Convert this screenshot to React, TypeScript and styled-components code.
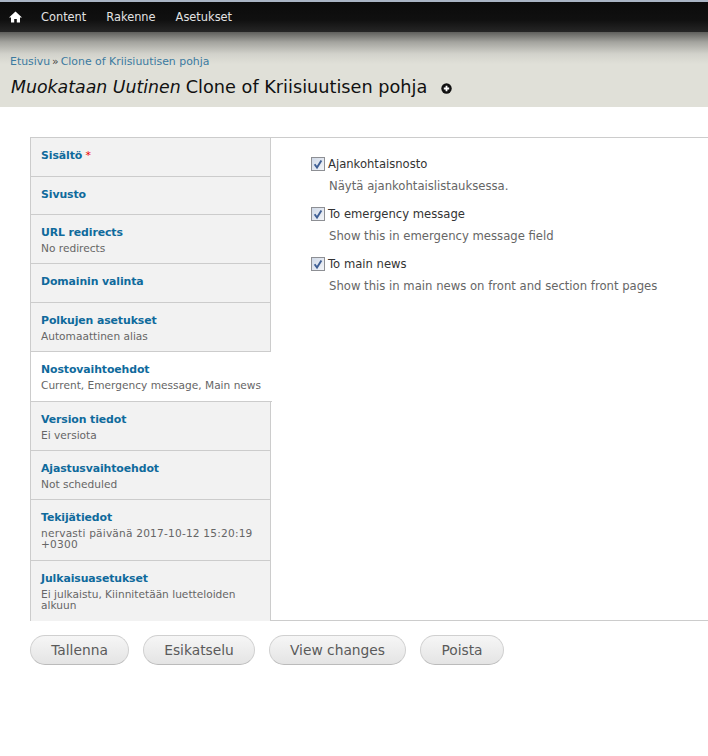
import React from "react";
import styled, { createGlobalStyle } from "styled-components";

const Global = createGlobalStyle`
  html, body { margin: 0; padding: 0; background: #fff; }
  body { font-family: "DejaVu Sans", Verdana, sans-serif; color: #333; overflow-x: hidden; }
`;

const Page = styled.div`
  width: 708px;
  height: 756px;
  overflow: hidden;
  background: #fff;
`;

const Toolbar = styled.nav`
  height: 32px;
  box-sizing: border-box;
  border-top: 2px solid #a9b4c4;
  background: linear-gradient(#0b0b0b, #101010 60%, #262626);
  display: flex;
  align-items: center;
  padding-left: 9px;
`;

const HomeLink = styled.a`
  display: flex;
  width: 13px;
  margin-right: 19px;
`;

const ToolbarLink = styled.a`
  color: #e2e2e2;
  font-size: 11.4px;
  margin-right: 20px;
`;

const Header = styled.header`
  height: 75px;
  box-sizing: border-box;
  padding: 23px 10px 0 11px;
  background: linear-gradient(#5f5f5c 0, #a3a39e 10px, #d2d2cb 22px, #e0e0d8 32px);
`;

const Breadcrumb = styled.div`
  font-size: 10.9px;
  line-height: 14px;
  margin-left: -1px;
  color: #3b7aa0;
  white-space: nowrap;
`;

const Sep = styled.span`
  color: #444;
  margin: 0 -1.5px;
`;

const Title = styled.h1`
  margin: 7px 0 0;
  font-weight: 400;
  font-size: 17.7px;
  line-height: 22px;
  color: #111;
  display: flex;
  align-items: center;
  white-space: nowrap;
`;

const TitleEm = styled.em`
  font-style: italic;
  font-size: 17.35px;
  margin-right: 5px;
`;

const AddIcon = styled.svg`
  width: 11px;
  height: 11px;
  margin-left: 14px;
  margin-top: 3px;
`;

const Main = styled.main`
  margin: 30px 0 0 30px;
`;

const Tabs = styled.div`
  display: flex;
  border-top: 1px solid #ccc;
  border-bottom: 1px solid #ccc;
  height: 482px;
  box-sizing: content-box;
`;

const TabList = styled.ul`
  list-style: none;
  margin: 0;
  padding: 0;
  width: 241px;
  flex: none;
  box-sizing: border-box;
  border-left: 1px solid #ccc;
`;

const Tab = styled.li<{ $h: number; $active?: boolean; $last?: boolean }>`
  height: ${(p) => p.$h}px;
  box-sizing: border-box;
  padding: 10px ${(p) => (p.$active ? "0" : "10px")} 0 10px;
  background: ${(p) => (p.$active ? "#fff" : "#f2f2f2")};
  border-bottom: ${(p) => (p.$last ? "0" : "1px solid #ccc")};
  border-right: ${(p) => (p.$active ? "0" : "1px solid #ccc")};
  width: ${(p) => (p.$active ? "241px" : "240px")};
`;

const TabTitle = styled.a`
  display: block;
  font-weight: 700;
  font-size: 10.9px;
  letter-spacing: -0.1px;
  line-height: 16px;
  color: #0f6a9c;
`;

const Req = styled.span`
  color: #e00;
  font-weight: 400;
  letter-spacing: 0;
`;

const TabSummary = styled.div<{ $spaced?: boolean }>`
  font-size: 10.6px;
  line-height: 11px;
  margin-top: 2px;
  color: #666;
  letter-spacing: ${(p) => (p.$spaced ? "0.2px" : "0")};
`;

const Pane = styled.div`
  flex: 1;
  padding: 17px 0 0 40px;
`;

const Option = styled.div`
  height: 50px;
`;

const OptionLabel = styled.label`
  display: flex;
  align-items: center;
  height: 18px;
  font-size: 11.6px;
  color: #333;
`;

const Check = styled.svg`
  width: 14px;
  height: 14px;
  margin-right: 3px;
  margin-left: 0;
`;

const OptionDesc = styled.div`
  margin: 6px 0 0 18px;
  font-size: 11.65px;
  line-height: 15px;
  color: #666;
  white-space: nowrap;
`;

const Actions = styled.div`
  display: flex;
  gap: 14px;
  margin-top: 14px;
`;

const Button = styled.button<{ $w: number }>`
  width: ${(p) => p.$w}px;
  height: 30px;
  padding: 0;
  border-radius: 15px;
  border: 1px solid #d0d0d0;
  border-bottom-color: #bbb;
  background: linear-gradient(#f6f6f6, #e4e4e4);
  font-family: inherit;
  font-size: 13.8px;
  color: #5a5a5a;
`;

const tabs = [
  { h: 39, title: "Sisältö", req: true },
  { h: 38, title: "Sivusto" },
  { h: 49, title: "URL redirects", sum: "No redirects" },
  { h: 39, title: "Domainin valinta" },
  { h: 49, title: "Polkujen asetukset", sum: "Automaattinen alias" },
  { h: 50, title: "Nostovaihtoehdot", sum: "Current, Emergency message, Main news", active: true },
  { h: 49, title: "Version tiedot", sum: "Ei versiota" },
  { h: 49, title: "Ajastusvaihtoehdot", sum: "Not scheduled" },
  { h: 61, title: "Tekijätiedot", sum: "nervasti päivänä 2017-10-12 15:20:19 +0300", spaced: true },
  { h: 60, title: "Julkaisuasetukset", sum: "Ei julkaistu, Kiinnitetään luetteloiden alkuun", last: true },
];

const options = [
  { label: "Ajankohtaisnosto", desc: "Näytä ajankohtaislistauksessa." },
  { label: "To emergency message", desc: "Show this in emergency message field" },
  { label: "To main news", desc: "Show this in main news on front and section front pages" },
];

const CheckIcon = () => (
  <Check viewBox="0 0 14 14">
    <defs>
      <linearGradient id="cb" x1="0" y1="0" x2="1" y2="1">
        <stop offset="0" stopColor="#cfd8e6" />
        <stop offset="1" stopColor="#f4f6fa" />
      </linearGradient>
    </defs>
    <rect x="0.5" y="0.5" width="13" height="13" fill="url(#cb)" stroke="#8d8f94" />
    <path d="M3.6 7.2 L6 10.6 L10.4 3.4" fill="none" stroke="#3f5f95" strokeWidth="1.9" />
  </Check>
);

export default function App() {
  return (
    <Page>
      <Global />
      <Toolbar>
        <HomeLink>
          <svg viewBox="0 0 13 12" width="13" height="12">
            <path d="M6.5 0.5 L13 6.4 L11 6.4 L11 11.5 L7.8 11.5 L7.8 8 L5.2 8 L5.2 11.5 L2 11.5 L2 6.4 L0 6.4 Z" fill="#fff" />
          </svg>
        </HomeLink>
        <ToolbarLink>Content</ToolbarLink>
        <ToolbarLink>Rakenne</ToolbarLink>
        <ToolbarLink>Asetukset</ToolbarLink>
      </Toolbar>
      <Header>
        <Breadcrumb>
          Etusivu <Sep>»</Sep> Clone of Kriisiuutisen pohja
        </Breadcrumb>
        <Title>
          <TitleEm>Muokataan Uutinen</TitleEm> Clone of Kriisiuutisen pohja
          <AddIcon viewBox="0 0 11 11">
            <circle cx="5.5" cy="5.5" r="5.2" fill="#111" />
            <path d="M5.5 2.8 V8.2 M2.8 5.5 H8.2" stroke="#fff" strokeWidth="1.8" />
          </AddIcon>
        </Title>
      </Header>
      <Main>
        <Tabs>
          <TabList>
            {tabs.map((t) => (
              <Tab key={t.title} $h={t.h} $active={t.active} $last={t.last}>
                <TabTitle>
                  {t.title}
                  {t.req && <Req> *</Req>}
                </TabTitle>
                {t.sum && <TabSummary $spaced={t.spaced}>{t.sum}</TabSummary>}
              </Tab>
            ))}
          </TabList>
          <Pane>
            {options.map((o) => (
              <Option key={o.label}>
                <OptionLabel>
                  <CheckIcon />
                  {o.label}
                </OptionLabel>
                <OptionDesc>{o.desc}</OptionDesc>
              </Option>
            ))}
          </Pane>
        </Tabs>
        <Actions>
          <Button $w={99}>Tallenna</Button>
          <Button $w={112}>Esikatselu</Button>
          <Button $w={137}>View changes</Button>
          <Button $w={84}>Poista</Button>
        </Actions>
      </Main>
    </Page>
  );
}
